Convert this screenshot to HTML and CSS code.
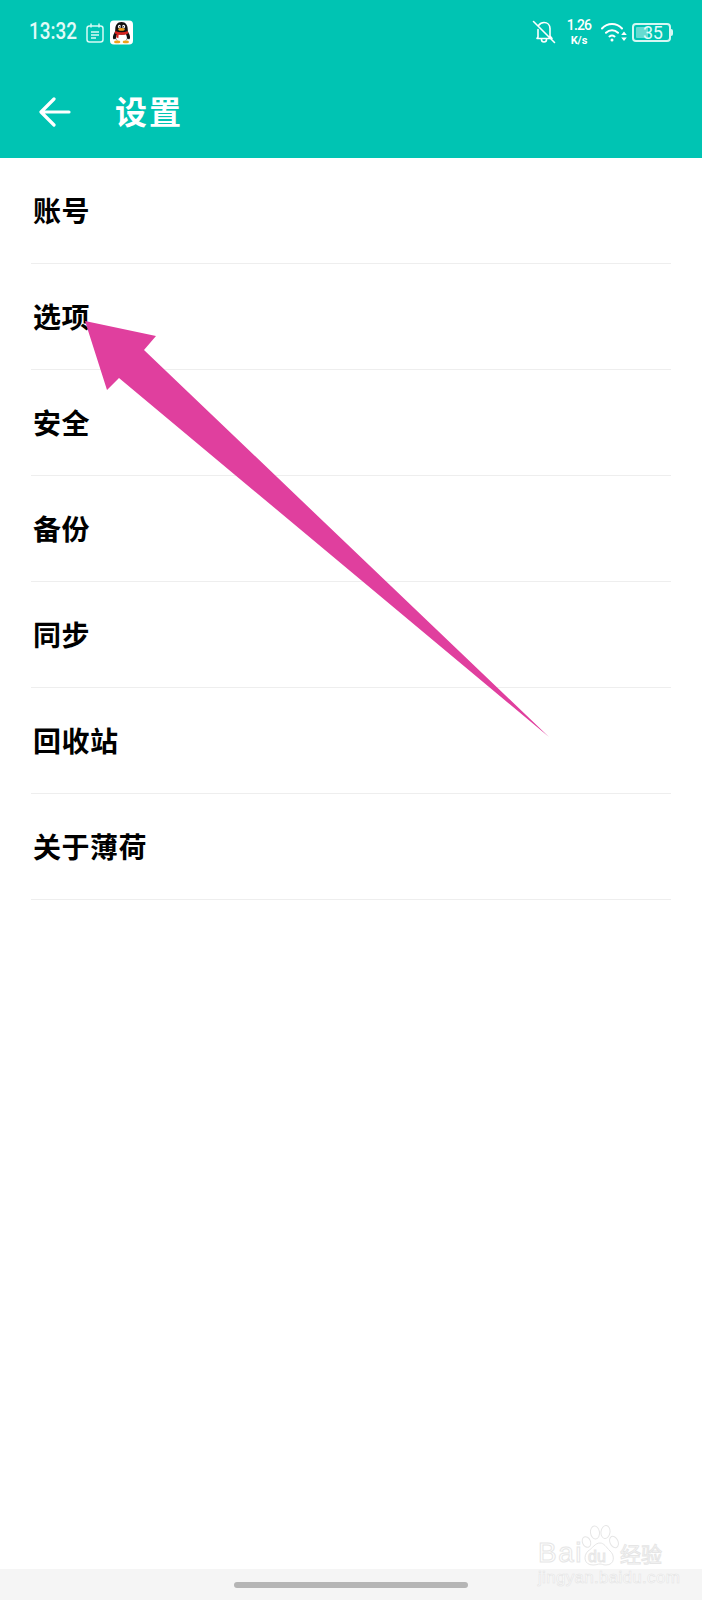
FILE: index.html
```html
<!DOCTYPE html>
<html lang="zh-CN">
<head>
  <meta charset="UTF-8" />
  <meta name="viewport" content="width=device-width, initial-scale=1.0" />
  <title>设置</title>
  <link rel="stylesheet" href="styles.css">
</head>
<body>
  <div class="screen">
    <header class="app-header">
      <div class="status-bar">
        <div class="status-left">
          <span class="status-time">13:32</span>
          <svg class="icon-note" viewBox="0 0 18 20" fill="none" stroke="currentColor" stroke-width="1.5">
            <rect x="1" y="3" width="16" height="16" rx="2.5" />
            <path d="M5 0.5v4M13 0.5v4M5 9h8M5 12h8M5 15h5" />
          </svg>
          <svg class="icon-qq" viewBox="0 0 24 25">
            <rect width="24" height="25" rx="4" fill="#fff" />
            <path d="M12 1.500c4.500 0 6.500 3.500 6.500 7.500 0 2 .5 3 1.500 5 1.500 3 1 6-.5 5.500l-1-.8c-1 2-3 3-6.500 3s-5.500-1-6.500-3l-1 .8c-1.500.5-2-2.500-.5-5.500 1-2 1.500-3 1.500-5 0-4 2-7.500 6.500-7.500z" fill="#111" />
            <path d="M7.500 14c3 1 6 1 9 0 1 2 1.500 4 1 5.500-1 2-3 3-5.500 3s-4.500-1-5.500-3c-.5-1.500 0-3.500 1-5.500z" fill="#fff" />
            <ellipse cx="9.800" cy="6.300" rx="1.500" ry="2" fill="#fff" />
            <ellipse cx="14.200" cy="6.300" rx="1.500" ry="2" fill="#fff" />
            <circle cx="10.200" cy="6.500" r=".7" fill="#111" />
            <circle cx="13.800" cy="6.500" r=".7" fill="#111" />
            <ellipse cx="12" cy="9.300" rx="3.400" ry="1.400" fill="#f0a41c" />
            <path d="M5.500 11c4 1.800 9 1.800 13 0l.7 2.300c-1.200.8-2.600 1.300-4 1.600H9l-.3 3.600-2.200-1 .4-3.400c-.8-.2-1.500-.5-2-.9z" fill="#d8231f" />
            <ellipse cx="7.500" cy="22.300" rx="3.200" ry="1.500" fill="#f0a41c" />
            <ellipse cx="16.500" cy="22.300" rx="3.200" ry="1.500" fill="#f0a41c" />
          </svg>
        </div>
        <div class="status-right">
          <svg class="icon-bell" viewBox="0 0 24 24" fill="none" stroke="currentColor" stroke-width="1.600" stroke-linecap="round" stroke-linejoin="round">
            <path d="M6.500 5.500C8 3.500 10 2.500 12 2.500c3.600 0 6 2.600 6 6v7.500l2 2.500M5 18.500l1-1.500V9.500M5 18.500h14M9.500 19v.5a2.500 2.500 0 0 0 5 0V19M1.500 1.500l21 21" />
          </svg>
          <div class="net-speed">
            <span class="net-value">1.26</span>
            <span class="net-unit">K/s</span>
          </div>
          <svg class="icon-wifi" viewBox="0 0 26 20" fill="none" stroke="currentColor" stroke-width="2" stroke-linecap="round">
            <path d="M1 6.500C6.500 .5 15.500 .5 21 6.500M5 10.800c3.500-3.300 8.500-3.300 12 0M8.500 14.500c1.500-1.200 3.500-1.200 5 0" />
            <circle cx="11" cy="18" r="1.500" fill="currentColor" stroke="none" />
            <path d="M23 9.500l2.800 3.500h-5.600zM23 19l-2.800-3.500h5.600z" fill="currentColor" stroke="none" />
          </svg>
          <div class="battery">
            <div class="battery-body">
              <div class="battery-fill"></div>
              <span class="battery-level">35</span>
            </div>
            <div class="battery-tip"></div>
          </div>
        </div>
      </div>
      <div class="toolbar">
        <svg class="icon-back" viewBox="0 0 32 30" fill="none" stroke="currentColor" stroke-width="3.200" stroke-linecap="round" stroke-linejoin="round">
          <path d="M30 15H3M15 2L2 15l13 13" />
        </svg>
        <h1 class="toolbar-title">设置</h1>
      </div>
    </header>

    <main class="settings-list">
      <div class="settings-item">账号</div>
      <div class="settings-item">选项</div>
      <div class="settings-item">安全</div>
      <div class="settings-item">备份</div>
      <div class="settings-item">同步</div>
      <div class="settings-item">回收站</div>
      <div class="settings-item">关于薄荷</div>
    </main>

    <div class="nav-strip">
      <div class="nav-pill"></div>
    </div>

    <!-- 标注箭头 -->
    <svg class="pointer-arrow" viewBox="0 0 702 1600">
      <path d="M85 321L156 336 144 350 549 737 119 378 107 390z" fill="#e03f9e" />
    </svg>

    <div class="watermark">
      <span class="wm-bai">Bai</span>
      <svg class="wm-paw" viewBox="0 0 38 42" fill="#fff" stroke="#e6e6e6" stroke-width="1">
        <ellipse cx="14" cy="7.500" rx="4.500" ry="6.500" transform="rotate(-8 14 7.500)" />
        <ellipse cx="24.500" cy="7" rx="4.500" ry="6.500" transform="rotate(8 24.500 7)" />
        <ellipse cx="5.500" cy="17" rx="4" ry="5.500" transform="rotate(-25 5.500 17)" />
        <ellipse cx="33" cy="17" rx="4" ry="6" transform="rotate(-25 33 17)" />
        <path d="M19 18c4 0 6 4 10 8 5 4 5 14-4 14-3 0-4-1-6-1s-4 1-7 1c-9 0-10-9-5-14 5-3 7-8 12-8z" />
      </svg>
      <span class="wm-du">du</span>
      <span class="wm-cn">经验</span>
      <span class="wm-url">jingyan.baidu.com</span>
    </div>
  </div>
</body>
</html>
```

FILE: styles.css
```css
html, body {
  margin: 0;
  padding: 0;
  background: #fff;
}

.screen {
  position: relative;
  width: 702px;
  height: 1600px;
  display: flex;
  flex-direction: column;
  overflow: hidden;
  font-family: "Noto Sans CJK SC", "Noto Sans", sans-serif;
  color: #000;
}

.app-header {
  height: 158px;
  background: #00c4b3;
  color: #fff;
  flex: none;
}

.status-bar {
  height: 64px;
  padding: 19px 29px 0 29px;
  box-sizing: border-box;
  display: flex;
  justify-content: space-between;
  align-items: flex-start;
}

.status-left,
.status-right {
  display: flex;
  align-items: center;
  height: 26px;
}

.status-time {
  font-family: Roboto, "Liberation Sans", sans-serif;
  font-size: 23px;
  font-weight: 500;
  line-height: 26px;
  width: 57px;
  color: #e2fbf8;
  white-space: nowrap;
  transform: scaleX(0.82);
  transform-origin: left center;
}

.icon-note {
  width: 18px;
  height: 20px;
  margin: 2px 6px 0 0;
  color: #d8faf6;
}

.icon-qq {
  width: 23px;
  height: 25px;
}

.icon-bell {
  width: 24px;
  height: 24px;
  margin-right: 10px;
}

.net-speed {
  display: flex;
  flex-direction: column;
  align-items: center;
  width: 26px;
  margin: 0 9px 0 0;
  font-family: Roboto, "Liberation Sans", sans-serif;
}

.net-value {
  font-size: 14px;
  line-height: 14px;
  letter-spacing: -0.8px;
  font-weight: 500;
}

.net-unit {
  margin-top: 3px;
  font-size: 11px;
  line-height: 11px;
  font-weight: 700;
}

.icon-wifi {
  width: 26px;
  height: 20px;
  margin-right: 5px;
}

.battery {
  display: flex;
  align-items: center;
}

.battery-body {
  position: relative;
  width: 39px;
  height: 19px;
  box-sizing: border-box;
  border: 2px solid #d5f7f3;
  border-radius: 4px;
  padding: 2px;
}

.battery-fill {
  width: 12px;
  height: 100%;
  background: rgba(255, 255, 255, 0.4);
  border-radius: 1px;
}

.battery-level {
  position: absolute;
  top: -2px;
  left: 9px;
  font-family: Roboto, "Liberation Sans", sans-serif;
  font-size: 18px;
  line-height: 19px;
  letter-spacing: -0.3px;
  color: #e2fbf8;
}

.battery-tip {
  width: 2px;
  height: 7px;
  background: #d5f7f3;
  border-radius: 0 2px 2px 0;
}

.toolbar {
  height: 94px;
  display: flex;
  align-items: center;
  padding: 0 0 2px 39px;
  box-sizing: border-box;
}

.icon-back {
  width: 32px;
  height: 30px;
  margin: 4px 44px 0 0;
}

.toolbar-title {
  margin: 0;
  font-size: 32px;
  line-height: 40px;
  font-weight: 700;
  letter-spacing: 2px;
}

.settings-list {
  flex: 1;
  padding: 0 31px;
}

.settings-item {
  height: 106px;
  box-sizing: border-box;
  border-bottom: 1px solid #eeeeee;
  display: flex;
  align-items: center;
  padding: 0 0 2px 2px;
  font-size: 28px;
  font-weight: 700;
  letter-spacing: 0.5px;
}

.nav-strip {
  height: 31px;
  flex: none;
  background: #f5f5f5;
  display: flex;
  justify-content: center;
  padding-top: 13px;
  box-sizing: border-box;
}

.nav-pill {
  width: 234px;
  height: 6px;
  border-radius: 3px;
  background: #b5b5b5;
}

/* overlays */
.pointer-arrow {
  position: absolute;
  top: 0;
  left: 0;
  width: 702px;
  height: 1600px;
  pointer-events: none;
}

.watermark {
  position: absolute;
  left: 538px;
  top: 1525px;
  width: 130px;
  height: 62px;
  color: #fff;
  font-family: "Liberation Sans", sans-serif;
  -webkit-text-stroke: 1px #e6e6e6;
  white-space: nowrap;
}

.wm-bai {
  position: absolute;
  left: 0;
  top: 14px;
  font-size: 28px;
  line-height: 28px;
  letter-spacing: 1.5px;
}

.wm-paw {
  position: absolute;
  left: 43px;
  top: 0;
  width: 38px;
  height: 42px;
}

.wm-du {
  position: absolute;
  left: 50px;
  top: 24px;
  font-size: 16px;
  line-height: 16px;
}

.wm-cn {
  position: absolute;
  left: 82px;
  top: 15px;
  font-family: "Noto Sans CJK SC", sans-serif;
  font-size: 21px;
  line-height: 26px;
}

.wm-url {
  position: absolute;
  left: 0;
  top: 44px;
  font-size: 17px;
  line-height: 18px;
  letter-spacing: 0.3px;
  -webkit-text-stroke: 0.6px #e4e4e4;
}
```
